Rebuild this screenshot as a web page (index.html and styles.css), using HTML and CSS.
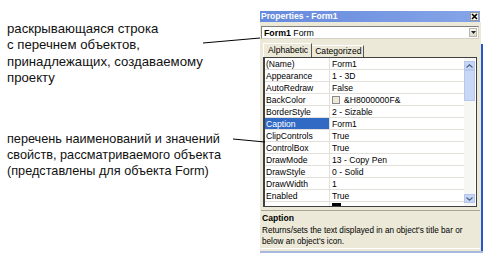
FILE: index.html
```html
<!DOCTYPE html>
<html>
  <head>
    <title>Properties - Form1</title>
    <link rel="stylesheet" href="styles.css">
  </head>
  <body>
    <div class="notes">
      <p class="note note-top">раскрывающаяся строка<br>с перечнем объектов,<br>принадлежащих, создаваемому<br>проекту</p>
      <p class="note note-bottom">перечень наименований и значений<br>свойств, рассматриваемого объекта<br>(представлены для объекта Form)</p>
    </div>

    <div class="window">
      <div class="titlebar">
        <span>Properties - Form1</span>
        <span class="close">
          <svg width="7" height="7" viewBox="0 0 7 7"><path d="M1 1L6 6M6 1L1 6" stroke="#000" stroke-width="1.6"/></svg>
        </span>
      </div>

      <div class="combo-row">
        <div class="combo">
          <span><b>Form1</b> Form</span>
          <span class="drop">
            <svg width="5" height="3" viewBox="0 0 5 3"><path d="M0 0H5L2.5 3Z" fill="#222"/></svg>
          </span>
        </div>
      </div>

      <div class="body">
        <div class="tabs">
          <span class="tab active">Alphabetic</span>
          <span class="tab">Categorized</span>
        </div>

        <div class="grid">
          <div class="rows">
            <div class="row"><span class="name">(Name)</span><span class="value">Form1</span></div>
            <div class="row"><span class="name">Appearance</span><span class="value">1 - 3D</span></div>
            <div class="row"><span class="name">AutoRedraw</span><span class="value">False</span></div>
            <div class="row"><span class="name">BackColor</span><span class="value"><i class="swatch"></i>&amp;H8000000F&amp;</span></div>
            <div class="row"><span class="name">BorderStyle</span><span class="value">2 - Sizable</span></div>
            <div class="row selected"><span class="name">Caption</span><span class="value">Form1</span></div>
            <div class="row"><span class="name">ClipControls</span><span class="value">True</span></div>
            <div class="row"><span class="name">ControlBox</span><span class="value">True</span></div>
            <div class="row"><span class="name">DrawMode</span><span class="value">13 - Copy Pen</span></div>
            <div class="row"><span class="name">DrawStyle</span><span class="value">0 - Solid</span></div>
            <div class="row"><span class="name">DrawWidth</span><span class="value">1</span></div>
            <div class="row"><span class="name">Enabled</span><span class="value">True</span></div>
            <div class="row"><span class="name"></span><span class="value"><i class="swatch black"></i></span></div>
          </div>
          <div class="scrollbar">
            <span class="arrow">
              <svg width="7" height="4" viewBox="0 0 7 4"><path d="M0.5 3.5L3.5 0.8L6.5 3.5" fill="none" stroke="#4d6185" stroke-width="1.2"/></svg>
            </span>
            <span class="thumb"></span>
            <span class="track"></span>
            <span class="arrow">
              <svg width="7" height="4" viewBox="0 0 7 4"><path d="M0.5 0.5L3.5 3.2L6.5 0.5" fill="none" stroke="#4d6185" stroke-width="1.2"/></svg>
            </span>
          </div>
        </div>

        <div class="desc">
          <b>Caption</b>
          <p>Returns/sets the text displayed in an object's title bar or below an object's icon.</p>
        </div>
      </div>
      <div class="frame-bottom"></div>
    </div>

    <svg class="leaders" width="489" height="259">
      <path d="M203 43L260 38" stroke="#000" stroke-width="1"/>
      <path d="M233 139L265 142" stroke="#000" stroke-width="1"/>
    </svg>
  </body>
</html>
```

FILE: styles.css
```css
body {
  margin: 0;
  width: 489px;
  height: 259px;
  overflow: hidden;
  background-color: #fff;
  display: flex;
  position: relative;
  font-family: "Liberation Sans", Arial, sans-serif;
}

.notes {
  width: 260px;
  padding-left: 7px;
  box-sizing: border-box;
}

.note {
  margin: 0;
  font-size: 13.2px;
  line-height: 16.4px;
  color: #111;
}

.note-top {
  margin-top: 21px;
}

.note-bottom {
  margin-top: 44px;
  font-size: 12.7px;
  line-height: 16.2px;
}

.window {
  width: 223px;
  margin-top: 11px;
  font-size: 8.6px;
  color: #000;
}

.titlebar {
  height: 11px;
  margin-right: 3px;
  background: linear-gradient(to right, #6589dc, #86a5e8);
  color: #fff;
  font-weight: bold;
  display: flex;
  align-items: center;
  justify-content: space-between;
  padding-left: 1px;
  line-height: 11px;
}

.close {
  width: 9px;
  height: 9px;
  margin-right: 1px;
  background-color: #f4f3ee;
  border: 1px solid #9a9a9a;
  box-sizing: border-box;
  display: flex;
  align-items: center;
  justify-content: center;
}

.combo-row {
  margin-right: 2px;
  background-color: #ece9d8;
  padding: 4px 2px 5px 1px;
}

.combo {
  height: 13px;
  box-sizing: border-box;
  background-color: #fff;
  border: 1px solid #7f7f7f;
  border-right-color: #d4d0c8;
  border-bottom-color: #d4d0c8;
  display: flex;
  align-items: center;
  justify-content: space-between;
  padding-left: 2px;
  font-size: 8.8px;
}

.drop {
  width: 8px;
  height: 9px;
  margin-right: 1px;
  box-sizing: border-box;
  background: linear-gradient(#f7f6f2, #dcd9cc);
  border: 1px solid #b8b5a8;
  display: flex;
  align-items: center;
  justify-content: center;
}

.body {
  background-color: #ece9d8;
  border-right: 2px solid #2456c9;
  padding-bottom: 2px;
}

.tabs {
  display: flex;
  align-items: flex-end;
  height: 13px;
  padding-left: 3px;
}

.tab {
  height: 11px;
  line-height: 11px;
  padding: 0 2px 0 3px;
  border: 1px solid #fff;
  border-bottom: none;
  border-left: none;
  border-right-color: #555;
}

.tab.active {
  height: 13px;
  line-height: 12px;
  padding: 0 3px 0 4px;
  border-left: 1px solid #fff;
}

.grid {
  display: flex;
  height: 150px;
  margin: 0 4px 3px 3px;
  box-sizing: border-box;
  border: 1px solid #404040;
  border-left-width: 2px;
  border-top-width: 1px;
  background-color: #fff;
  overflow: hidden;
}

.rows {
  flex: 1;
}

.row {
  display: flex;
  height: 12px;
  line-height: 12px;
  box-sizing: border-box;
  border-bottom: 1px solid #e2e0d8;
}

.name {
  width: 63px;
  padding-left: 1px;
  border-right: 1px solid #e2e0d8;
  white-space: nowrap;
  overflow: hidden;
}

.value {
  flex: 1;
  padding-left: 2px;
  display: flex;
  align-items: center;
}

.row.selected .name {
  background-color: #316ac5;
  color: #fff;
}

.swatch {
  width: 8px;
  height: 8px;
  box-sizing: border-box;
  border: 1px solid #8a8a8a;
  background-color: #ece9d8;
  margin-right: 4px;
}

.swatch.black {
  width: 9px;
  height: 3px;
  border: none;
  background-color: #000;
  margin-top: -6px;
}

.scrollbar {
  width: 11px;
  margin-right: 1px;
  display: flex;
  flex-direction: column;
  background-color: #f6f6f2;
}

.arrow {
  height: 9px;
  margin-top: 3px;
  box-sizing: border-box;
  background-color: #c8d6f6;
  border: 1px solid #b4c6ee;
  display: flex;
  align-items: center;
  justify-content: center;
}

.arrow:last-child {
  margin-top: 0;
  margin-bottom: 3px;
}

.thumb {
  height: 31px;
  background-color: #c9d7f7;
  border: 1px solid #b6c8ef;
  box-sizing: border-box;
}

.track {
  flex: 1;
}

.desc {
  height: 39px;
  margin: 0 1px 0 1px;
  box-sizing: border-box;
  border-top: 1px solid #a8a698;
  border-bottom: 1px solid #fff;
  padding: 2px 1px 0 1px;
  line-height: 11px;
  font-size: 8.2px;
}

.desc b {
  display: block;
  font-size: 8.6px;
}

.desc p {
  margin: 1px 0 0 0;
  width: 210px;
}

.frame-bottom {
  height: 2px;
  margin-right: 0;
  background-color: #a9b8de;
}

.leaders {
  position: absolute;
  left: 0;
  top: 0;
  pointer-events: none;
}
```
